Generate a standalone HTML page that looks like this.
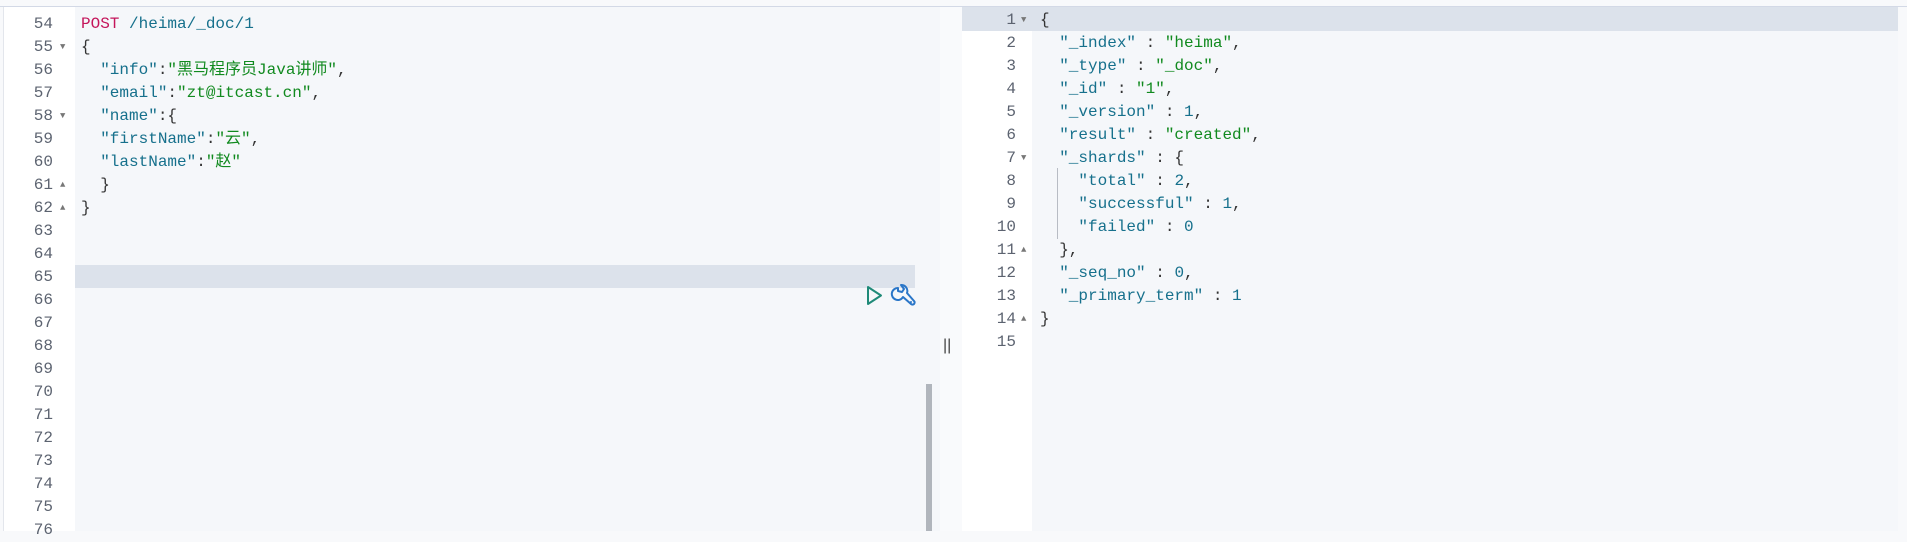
<!DOCTYPE html><html><head><meta charset="utf-8"><style>
body{margin:0;width:1907px;height:531px;overflow:hidden;background:#f8f9fb;position:relative;font-family:"Liberation Mono","Noto Sans CJK SC",monospace;font-size:16px}
.top{position:absolute;left:0;top:6px;width:1907px;height:1px;background:#d3d9e6}
.p{position:absolute;top:7px;height:524px}
.g{position:absolute;top:0;bottom:0;background:#fff}
.c{position:absolute;top:0;bottom:0;background:#f5f7fa}
.ln{position:absolute;height:23px;line-height:23px;color:#5c6370;text-align:right;width:50px;left:0}
.t{position:absolute;height:23px;line-height:23px;white-space:pre;color:#333}
.k{color:#16708c}.s{color:#118a1f}.m{color:#c4155a}.n{color:#16708c}
.f{position:absolute;font-size:9px;color:#777;line-height:23px}
</style></head><body>
<div class="top"></div>
<div class="p" style="left:3px;width:937px;border-left:1px solid #e3e6ec">
<div class="g" style="left:0;width:71px"></div>
<div class="c" style="left:71px;right:0"></div>
<div style="position:absolute;left:71px;width:840px;top:258px;height:23px;background:#dce2eb"></div>
<div style="position:absolute;left:922px;width:6px;top:377px;bottom:0;background:#b0b5bc"></div>
</div>
<div style="position:absolute;left:940px;top:7px;width:22px;bottom:0;background:#f9fafc"></div>
<div style="position:absolute;left:943px;top:337px;font-family:'Liberation Sans';font-size:16px;color:#444">||</div>
<div class="p" style="left:962px;width:936px">
<div class="g" style="left:0;width:70px"></div>
<div class="c" style="left:70px;right:0"></div>
<div style="position:absolute;left:0;right:0;top:0;height:24px;background:#dce2eb"></div>
</div>
<div style="position:absolute;left:1057px;top:168px;height:71px;width:1px;background:#b8bcc4"></div>
<svg style="position:absolute;left:865px;top:284px" width="52" height="24"><path d="M3 3 L16 11.5 L3 20 Z" fill="none" stroke="#1f8a78" stroke-width="2" stroke-linejoin="round"/><path d="M33 4 a6 6 0 1 0 5 9 l8 7 a2 2 0 0 0 3 -3 l-7 -8 a6 6 0 0 0 -6 -8 l3 4 -2 3 -4 -1z" fill="none" stroke="#2a76c8" stroke-width="2" stroke-linejoin="round"/><circle cx="46" cy="18" r="1" fill="#2a76c8"/></svg>
<div id="L"></div>
<script>
var L=[
['54','<span class="m">POST</span> <span class="k">/heima/_doc/1</span>',0],
['55','{',1],
['56','  <span class="k">"info"</span>:<span class="s">"黑马程序员Java讲师"</span>,',0],
['57','  <span class="k">"email"</span>:<span class="s">"zt@itcast.cn"</span>,',0],
['58','  <span class="k">"name"</span>:{',1],
['59','  <span class="k">"firstName"</span>:<span class="s">"云"</span>,',0],
['60','  <span class="k">"lastName"</span>:<span class="s">"赵"</span>',0],
['61','  }',2],['62','}',2]];
var h='';
for(var i=54;i<=76;i++){var y=13+(i-54)*23;var r=L[i-54];
h+='<div class="ln" style="left:3px;top:'+y+'px">'+i+'</div>';
if(r){h+='<div class="t" style="left:81px;top:'+y+'px">'+r[1]+'</div>';if(r[2])h+='<div class="f" style="left:60px;top:'+y+'px">'+(r[2]==1?'▼':'▲')+'</div>';}}
var R=['{',
'  <span class="k">"_index"</span> : <span class="s">"heima"</span>,',
'  <span class="k">"_type"</span> : <span class="s">"_doc"</span>,',
'  <span class="k">"_id"</span> : <span class="s">"1"</span>,',
'  <span class="k">"_version"</span> : <span class="n">1</span>,',
'  <span class="k">"result"</span> : <span class="s">"created"</span>,',
'  <span class="k">"_shards"</span> : {',
'    <span class="k">"total"</span> : <span class="n">2</span>,',
'    <span class="k">"successful"</span> : <span class="n">1</span>,',
'    <span class="k">"failed"</span> : <span class="n">0</span>',
'  },',
'  <span class="k">"_seq_no"</span> : <span class="n">0</span>,',
'  <span class="k">"_primary_term"</span> : <span class="n">1</span>',
'}',''];
var F={1:1,7:1,11:2,14:2};
for(var j=1;j<=15;j++){var y=9+(j-1)*23;
h+='<div class="ln" style="left:966px;top:'+y+'px">'+j+'</div>';
h+='<div class="t" style="left:1040px;top:'+y+'px">'+R[j-1]+'</div>';
if(F[j])h+='<div class="f" style="left:1021px;top:'+y+'px">'+(F[j]==1?'▼':'▲')+'</div>';}
document.getElementById('L').innerHTML=h;
</script>
</body></html>
